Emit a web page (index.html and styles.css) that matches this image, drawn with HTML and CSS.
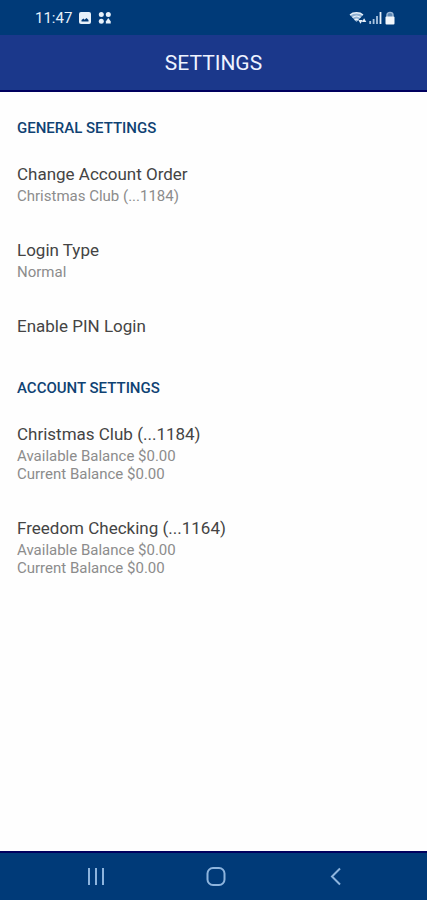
FILE: index.html
```html
<!DOCTYPE html>
<html lang="en">

<head>
    <meta charset="UTF-8">
    <meta name="viewport" content="width=device-width, initial-scale=1.0">
    <title>Settings</title>
    <link rel="stylesheet" href="styles.css">
</head>

<body>
    <div class="status-bar">
        <div class="status-left">
            <span class="time">11:47</span>
            <svg class="image-icon" width="12" height="12" viewBox="0 0 12 12">
                <rect width="12" height="12" rx="2" fill="#e6f0fa" />
                <path d="M2.5 9.5V8L4.5 6.5L5.6 7.8L7.5 6L9.5 8V9.5Z" fill="#003a78" />
            </svg>
            <svg width="14" height="14" viewBox="0 0 14 14" fill="#e6f0fa">
                <circle cx="3.3" cy="3.5" r="2.5" />
                <circle cx="10.3" cy="3.5" r="2.5" />
                <circle cx="3.3" cy="10.3" r="2.5" />
                <path d="M10.3 7L12.6 10.3L12.8 12.6H7.8L8 10.3Z" />
            </svg>
        </div>
        <div class="status-right">
            <svg width="18" height="14" viewBox="0 0 18 14">
                <path d="M1 4C4.2 1 10.8 1 14 4L7.5 11Z" fill="#8fb0d2" />
                <path d="M1 4C4.2 1 10.8 1 14 4M3.5 6.6C5.8 4.6 9.2 4.6 11.5 6.6M5.6 9C6.8 8 8.2 8 9.4 9" fill="none" stroke="#e6f0fa" stroke-width="1.3" />
                <path d="M9.3 9L11.5 12.8L13.7 9ZM12.9 11L15.1 7.2L17.3 11Z" fill="#e6f0fa" />
            </svg>
            <svg width="13" height="14" viewBox="0 0 13 14">
                <path d="M1.2 10V13M4.6 8V13M8 5V13" stroke="#a9c4df" stroke-width="1.8" />
                <path d="M11.5 1V13" stroke="#e6f0fa" stroke-width="1.8" />
            </svg>
            <svg width="12" height="14" viewBox="0 0 12 14">
                <path d="M3 6V3.8C3 .6 9 .6 9 3.8V6" fill="#5f88b4" stroke="#9dbad8" stroke-width="1.4" />
                <rect x="1.5" y="5.5" width="9" height="8" rx="1" fill="#f2f7fc" />
            </svg>
        </div>
    </div>

    <header>
        <h1>SETTINGS</h1>
    </header>

    <main>
        <section>
            <h2>GENERAL SETTINGS</h2>
            <button type="button" class="setting">
                <span class="title">Change Account Order</span>
                <span class="detail">Christmas Club (...1184)</span>
            </button>
            <button type="button" class="setting">
                <span class="title">Login Type</span>
                <span class="detail">Normal</span>
            </button>
            <button type="button" class="setting">
                <span class="title">Enable PIN Login</span>
            </button>
        </section>

        <section>
            <h2>ACCOUNT SETTINGS</h2>
            <button type="button" class="setting">
                <span class="title">Christmas Club (...1184)</span>
                <span class="detail">Available Balance $0.00</span>
                <span class="detail">Current Balance $0.00</span>
            </button>
            <button type="button" class="setting">
                <span class="title">Freedom Checking (...1164)</span>
                <span class="detail">Available Balance $0.00</span>
                <span class="detail">Current Balance $0.00</span>
            </button>
        </section>
    </main>

    <nav>
        <button type="button" aria-label="Recent apps">
            <svg width="20" height="20" viewBox="0 0 20 20">
                <path d="M3 1V18M10 1V18M17 1V18" />
            </svg>
        </button>
        <button type="button" aria-label="Home">
            <svg width="20" height="20" viewBox="0 0 20 20">
                <rect x="1.5" y="1" width="17" height="17" rx="5.5" />
            </svg>
        </button>
        <button type="button" aria-label="Back">
            <svg width="20" height="20" viewBox="0 0 20 20">
                <path d="M14 1.5L6 9.5L14 17.5" />
            </svg>
        </button>
    </nav>
</body>

</html>
```

FILE: styles.css
```css
* {
    box-sizing: border-box;
}

body {
    margin: 0;
    min-height: 100vh;
    display: flex;
    flex-direction: column;
    font-family: Roboto, "Liberation Sans", sans-serif;
    background-color: #fefefe;
}

h1,
h2 {
    margin: 0;
}

button {
    padding: 0;
    border: none;
    background: none;
    font-family: inherit;
    cursor: pointer;
}

.status-bar {
    display: flex;
    justify-content: space-between;
    align-items: center;
    height: 35px;
    padding: 0 31px 0 35px;
    background-color: #003a78;
}

.status-left,
.status-right {
    display: flex;
    align-items: center;
}

.status-left {
    gap: 7px;
}

.status-right {
    gap: 2px;
}

.time {
    font-size: 15px;
    line-height: 20px;
    color: #e6f0fa;
}

header {
    padding: 15px 0 13px;
    background-color: #1b388b;
    border-bottom: 2px solid #00005e;
    text-align: center;
}

h1 {
    font-size: 21px;
    font-weight: 400;
    line-height: 27px;
    color: #eef3ff;
}

main {
    flex: 1;
    padding: 27px 17px;
}

section {
    display: flex;
    flex-direction: column;
    margin-bottom: 40px;
}

h2 {
    margin-bottom: 24px;
    font-size: 15px;
    font-weight: 500;
    line-height: 18px;
    color: #0f4273;
}

.setting {
    display: flex;
    flex-direction: column;
    text-align: left;
}

.setting + .setting {
    margin-top: 32px;
}

.title {
    font-size: 17px;
    line-height: 26px;
    color: #444;
}

.detail {
    font-size: 15px;
    line-height: 18px;
    color: #8c8c8c;
}

nav {
    display: flex;
    height: 49px;
    padding: 0 31px 0 36px;
    background-color: #003a78;
    border-top: 2px solid #00005e;
}

nav button {
    flex: 1;
    display: flex;
    justify-content: center;
    align-items: center;
}

nav svg {
    fill: none;
    stroke: #8db4dd;
    stroke-width: 2;
}
```
